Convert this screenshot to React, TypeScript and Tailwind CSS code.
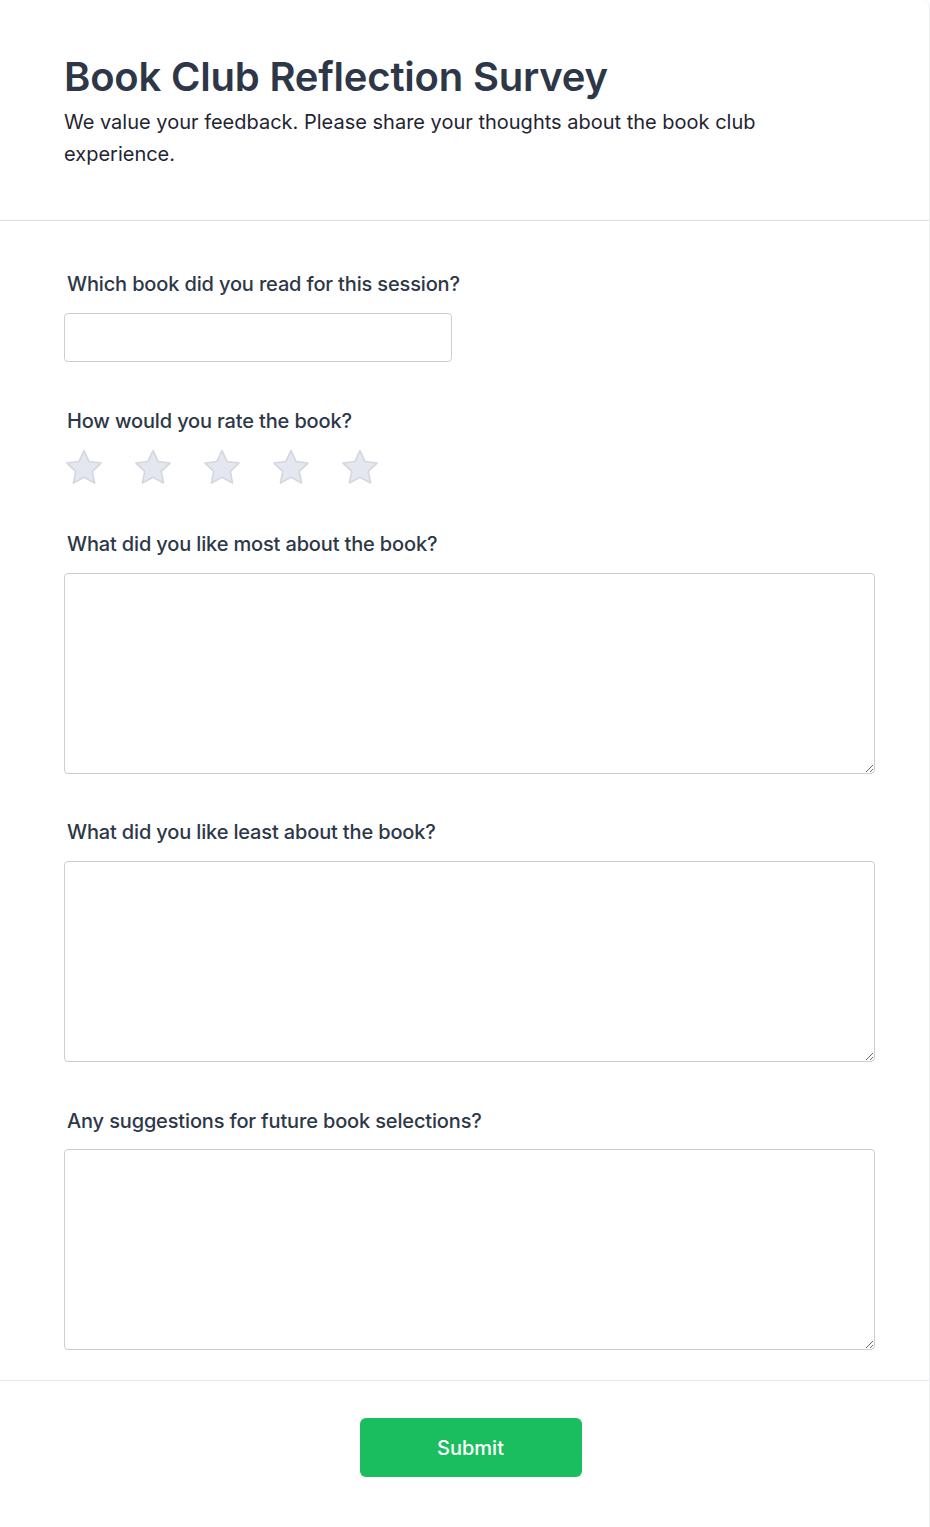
import React from "react";

function Star() {
  return (
    <svg width="40" height="38" viewBox="0 0 24 23" className="block">
      <path
        d="M12 1.6l3.1 6.6 7.2.9-5.3 5 1.4 7.1L12 17.7l-6.4 3.5L7 14.1 1.7 9.1l7.2-.9L12 1.6z"
        fill="#e5e7f0"
        stroke="#d4d7e0"
        strokeWidth="1"
        strokeLinejoin="round"
      />
    </svg>
  );
}

function Label({ children }: { children: React.ReactNode }) {
  return (
    <label className="block pl-[3px] text-[20px] leading-[28px] font-medium tracking-[-0.15px] text-[#2d3748]">
      {children}
    </label>
  );
}

function Area({ mt }: { mt: string }) {
  return (
    <textarea
      className={`${mt} block w-[811px] h-[201px] rounded border border-[#c9cdd8] bg-white outline-none`}
    />
  );
}

export default function App() {
  return (
    <div
      className="w-[930px] min-h-[1527px] bg-white border-r border-[#eceef3] rounded-tr-lg"
      style={{ fontFamily: "Inter, 'Noto Sans', sans-serif" }}
    >
      <header className="px-16 pt-[53px] pb-[50px] border-b border-[#d9dce6]">
        <h1 className="text-[40px] leading-[48px] font-semibold text-[#2d3748] tracking-[-0.2px]">
          Book Club Reflection Survey
        </h1>
        <p className="mt-[5px] max-w-3xl text-[20px] leading-[32px] text-[#1f2533]">
          We value your feedback. Please share your thoughts about the book club experience.
        </p>
      </header>

      <form className="pl-16 pt-[49px] pb-[30px]">
        <div>
          <Label>Which book did you read for this session?</Label>
          <input
            type="text"
            className="mt-[15px] block w-[388px] h-[49px] rounded border border-[#c9cdd8] bg-white outline-none"
          />
        </div>

        <div className="mt-[45px]">
          <Label>How would you rate the book?</Label>
          <div className="mt-[13px] flex gap-[29px]">
            <Star />
            <Star />
            <Star />
            <Star />
            <Star />
          </div>
        </div>

        <div className="mt-[44px]">
          <Label>What did you like most about the book?</Label>
          <Area mt="mt-[15px]" />
        </div>

        <div className="mt-[44px]">
          <Label>What did you like least about the book?</Label>
          <Area mt="mt-[15px]" />
        </div>

        <div className="mt-[45px]">
          <Label>Any suggestions for future book selections?</Label>
          <Area mt="mt-[14px]" />
        </div>
      </form>

      <div className="border-t border-[#e5e7f0] pt-[37px] pb-[50px] flex justify-center pl-[12px]">
        <button
          type="button"
          className="w-[222px] h-[59px] rounded-md bg-[#1abe5e] text-white text-[20px] font-medium"
        >
          Submit
        </button>
      </div>
    </div>
  );
}
